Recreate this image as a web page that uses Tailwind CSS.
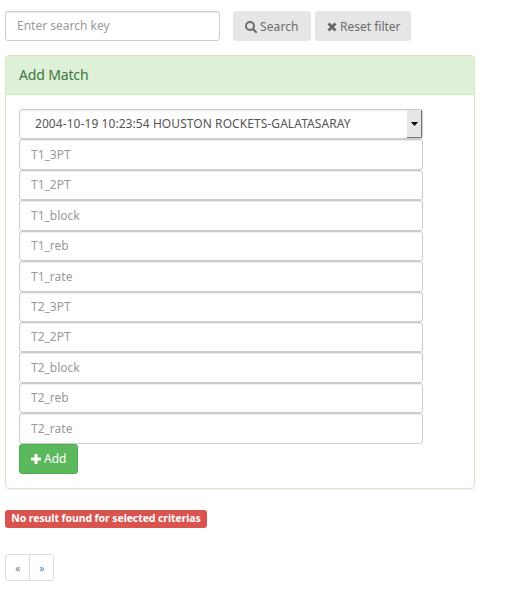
<!DOCTYPE html>
<html lang="en">
<head>
<meta charset="utf-8">
<title>Add Match</title>
<script src="https://cdn.jsdelivr.net/npm/@tailwindcss/browser@4"></script>
</head>
<body class="bg-white pl-[5px] pt-[11px] font-['Noto_Sans',sans-serif] text-[12px] text-[#333] overflow-hidden">
<form class="flex h-[30px]">
  <input type="text" placeholder="Enter search key" class="w-[215px] h-[30px] rounded-[3px] border border-[#ccc] px-[11px] pb-px shadow-[inset_0_1px_1px_rgba(0,0,0,0.075)] placeholder:text-[#999]">
  <button type="button" class="ml-[13px] w-[78px] h-[30px] rounded-[3px] bg-[#e6e6e6] text-[#6b6b6b] flex items-center pl-[12px] gap-[3px]">
    <svg class="w-[12px] h-[12px] mt-px shrink-0" viewBox="0 0 12 12" fill="none" stroke="#6b6b6b" stroke-width="1.9"><circle cx="5" cy="5" r="4"/><path d="M8 8l3 3" stroke-width="2.2" stroke-linecap="round"/></svg>
    <span class="pt-px tracking-[0.1px]">Search</span>
  </button>
  <button type="button" class="ml-[4px] w-[96px] h-[30px] rounded-[3px] bg-[#e6e6e6] text-[#6b6b6b] flex items-center pl-[12px] gap-[3px]">
    <svg class="w-[10px] h-[10px] mt-px shrink-0" viewBox="0 0 10 10" stroke="#666" stroke-width="2.8"><path d="M1.5 1.5l7 7M8.5 1.5l-7 7"/></svg>
    <span class="pt-px">Reset filter</span>
  </button>
</form>
<section class="mt-[14px] w-[470px] h-[434px] rounded-[4px] border border-[#d0e9c0] shadow-[0_1px_1px_rgba(0,0,0,0.05)]">
  <h3 class="h-[39px] rounded-t-[3px] border-b border-[#d0e9c0] bg-[#dff0d8] px-[13px] text-[14px] leading-[38px] tracking-[-0.15px] text-[#3c763d]">Add Match</h3>
  <form class="pl-[13px] pt-[14px]">
    <div class="flex w-[404px] h-[30.4px] rounded-[3px] border border-[#ccc] shadow-[inset_0_1px_1px_rgba(0,0,0,0.075)] text-[#555]">
      <span class="flex-1 pl-[15px] leading-[27px] tracking-[0.07px] whitespace-nowrap">2004-10-19 10:23:54 HOUSTON ROCKETS-GALATASARAY</span>
      <span class="w-[15px] h-[28px] bg-[#e6e6e6] border-r border-b border-[#777] flex items-center justify-center"><svg class="w-[7px] h-[4px]" viewBox="0 0 7 4"><path d="M0 0h7L3.5 4z" fill="#000"/></svg></span>
    </div>
    <div class="flex flex-col w-[404px]">
      <input placeholder="T1_3PT" class="h-[30.45px] rounded-[3px] border border-[#ccc] px-[11px] pb-[0.5px] shadow-[inset_0_1px_1px_rgba(0,0,0,0.075)] placeholder:text-[#999]">
      <input placeholder="T1_2PT" class="h-[30.45px] rounded-[3px] border border-[#ccc] px-[11px] pb-[0.5px] shadow-[inset_0_1px_1px_rgba(0,0,0,0.075)] placeholder:text-[#999]">
      <input placeholder="T1_block" class="h-[30.45px] rounded-[3px] border border-[#ccc] px-[11px] pb-[0.5px] shadow-[inset_0_1px_1px_rgba(0,0,0,0.075)] placeholder:text-[#999]">
      <input placeholder="T1_reb" class="h-[30.45px] rounded-[3px] border border-[#ccc] px-[11px] pb-[0.5px] shadow-[inset_0_1px_1px_rgba(0,0,0,0.075)] placeholder:text-[#999]">
      <input placeholder="T1_rate" class="h-[30.45px] rounded-[3px] border border-[#ccc] px-[11px] pb-[0.5px] shadow-[inset_0_1px_1px_rgba(0,0,0,0.075)] placeholder:text-[#999]">
      <input placeholder="T2_3PT" class="h-[30.45px] rounded-[3px] border border-[#ccc] px-[11px] pb-[0.5px] shadow-[inset_0_1px_1px_rgba(0,0,0,0.075)] placeholder:text-[#999]">
      <input placeholder="T2_2PT" class="h-[30.45px] rounded-[3px] border border-[#ccc] px-[11px] pb-[0.5px] shadow-[inset_0_1px_1px_rgba(0,0,0,0.075)] placeholder:text-[#999]">
      <input placeholder="T2_block" class="h-[30.45px] rounded-[3px] border border-[#ccc] px-[11px] pb-[0.5px] shadow-[inset_0_1px_1px_rgba(0,0,0,0.075)] placeholder:text-[#999]">
      <input placeholder="T2_reb" class="h-[30.45px] rounded-[3px] border border-[#ccc] px-[11px] pb-[0.5px] shadow-[inset_0_1px_1px_rgba(0,0,0,0.075)] placeholder:text-[#999]">
      <input placeholder="T2_rate" class="h-[30.45px] rounded-[3px] border border-[#ccc] px-[11px] pb-[0.5px] shadow-[inset_0_1px_1px_rgba(0,0,0,0.075)] placeholder:text-[#999]">
    </div>
    <button type="button" class="w-[59px] h-[30px] rounded-[3px] border border-[#4cae4c] bg-[#5cb85c] text-white flex items-center pl-[11px] gap-[3px]">
      <svg class="w-[10px] h-[10px] shrink-0" viewBox="0 0 10 10" fill="#fff"><path d="M3.5 0h3v3.5H10v3H6.5V10h-3V6.5H0v-3h3.5z"/></svg>
      <span class="leading-[18px]">Add</span>
    </button>
  </form>
</section>
<div class="mt-[21px] w-[202px] h-[18px] rounded-[3px] bg-[#d9534f] text-center text-[10.5px] font-bold leading-[17px] tracking-[-0.09px] text-white whitespace-nowrap">No result found for selected criterias</div>
<nav class="mt-[26px] flex w-[49px] h-[27px] rounded-[3px] border border-[#ddd] text-[10px] leading-[26px] text-center">
  <a class="w-[24px] text-[#777]">«</a>
  <a class="w-[24px] border-l border-[#ddd] text-[#428bca]">»</a>
</nav>
</body>
</html>
